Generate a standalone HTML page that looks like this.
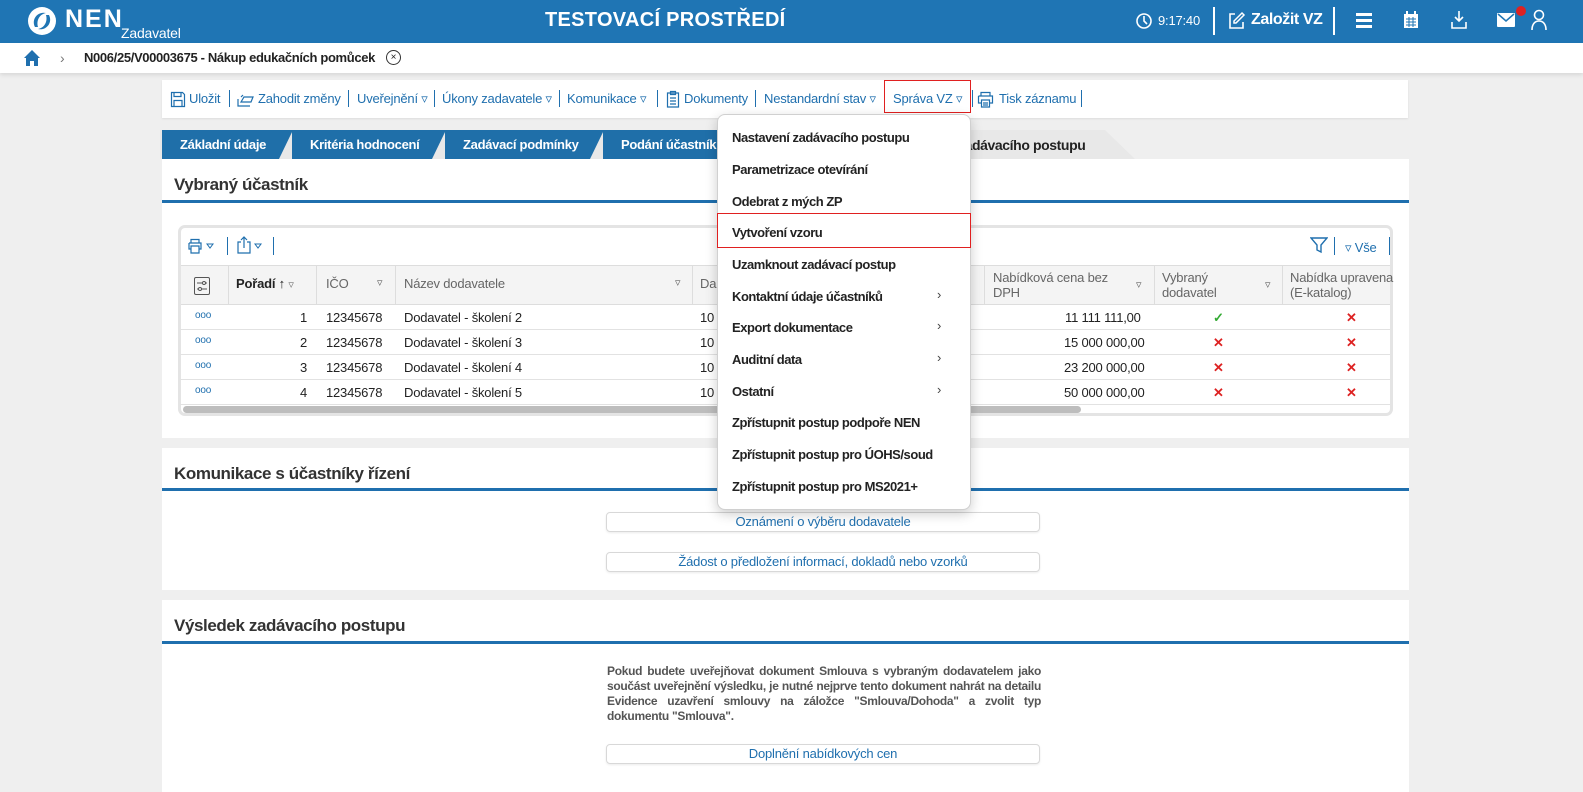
<!DOCTYPE html>
<html><head><meta charset="utf-8"><style>
*{box-sizing:border-box;margin:0;padding:0}
body{width:1583px;height:792px;overflow:hidden;background:#efefef;font-family:"Liberation Sans",sans-serif;font-size:13px;color:#222;position:relative;letter-spacing:-0.2px}
.a{position:absolute;white-space:nowrap}
.hdr{left:0;top:0;width:1583px;height:43px;background:#1f75b4}
.w{color:#fff}
.sep{position:absolute;width:1px;background:#1f6fae}
.panel{background:#fff;position:absolute;left:162px;width:1247px}
.ptitle{position:absolute;left:12px;font-size:17px;font-weight:bold;color:#333;letter-spacing:-0.4px}
.pline{position:absolute;left:0;width:1247px;height:3px;background:#1f6fae}
.btn{position:absolute;left:444px;width:434px;height:20px;border:1px solid #d8d8d8;border-radius:4px;text-align:center;color:#1f6fae;font-size:13px;line-height:18px;box-shadow:0 1px 2px rgba(0,0,0,.08)}
.tab{position:absolute;top:130px;height:29px;background:#1f6fa9;color:#fff;font-weight:bold;font-size:13px;line-height:30px;padding-left:18px;letter-spacing:-0.3px}
.tab:after{content:"";position:absolute;right:-14px;top:0;border-left:14px solid #1f6fa9;border-bottom:29px solid transparent}
.menu{left:717px;top:114px;width:254px;height:396px;background:#fff;border:1px solid #d0d0d0;border-radius:8px;box-shadow:0 4px 12px rgba(0,0,0,.2)}
.mi{position:absolute;left:15px;font-size:13px;color:#222;font-weight:bold;letter-spacing:-0.45px}
.chev{position:absolute;left:220px;color:#444;font-size:13px}
.row{position:absolute;left:180px;width:1210px;height:25px;border-bottom:1px solid #e2e2e2}
.c{position:absolute;top:5px}
.x{color:#d22;font-weight:bold}
</style></head><body>
<div class="a hdr"></div>
<svg class="a" style="left:26px;top:5px" width="32" height="32" viewBox="0 0 32 32"><circle cx="16" cy="16" r="14" fill="#fff"/><path d="M9 22 C5 14 12 6 20 8 C14 9 10 15 12 22Z" fill="#1f75b4"/><path d="M23 10 C27 18 20 26 12 24 C18 23 22 17 20 10Z" fill="#1f75b4"/></svg>
<div class="a w" style="left:65px;top:5px;font-size:25px;font-weight:bold;letter-spacing:2px">NEN</div>
<div class="a w" style="left:121px;top:25px;font-size:14px">Zadavatel</div>
<div class="a w" style="left:545px;top:9px;font-size:20px;font-weight:bold;letter-spacing:.3px">TESTOVACÍ PROSTŘEDÍ</div>
<svg class="a" style="left:1135px;top:12px" width="18" height="18" viewBox="0 0 18 18"><circle cx="9" cy="9" r="7" fill="none" stroke="#fff" stroke-width="1.6"/><path d="M9 4v5l3 3" fill="none" stroke="#fff" stroke-width="1.6"/></svg>
<div class="a w" style="left:1158px;top:13px;font-size:13px">9:17:40</div>
<div class="a" style="left:1213px;top:7px;width:2px;height:28px;background:#fff"></div>
<svg class="a" style="left:1227px;top:11px" width="19" height="19" viewBox="0 0 19 19"><path d="M8 3H3v14h13v-6" fill="none" stroke="#fff" stroke-width="1.6"/><path d="M15 2l2 2-8 8H7v-2z" fill="none" stroke="#fff" stroke-width="1.5"/></svg>
<div class="a w" style="left:1251px;top:11px;font-size:16px;font-weight:bold;letter-spacing:-0.4px">Založit VZ</div>
<div class="a" style="left:1333px;top:7px;width:2px;height:28px;background:#fff"></div>
<div class="a" style="left:1356px;top:13px;width:16px;height:3px;background:#fff;box-shadow:0 6px 0 #fff,0 12px 0 #fff"></div>
<svg class="a" style="left:1403px;top:11px" width="16" height="18" viewBox="0 0 16 18"><rect x="1" y="3" width="14" height="14" fill="#fff"/><rect x="3" y="0" width="2" height="4" fill="#fff"/><rect x="11" y="0" width="2" height="4" fill="#fff"/><path d="M3 8h10M3 11h10M3 14h10M6 6v10M10 6v10" stroke="#1f75b4" stroke-width="1"/></svg>
<svg class="a" style="left:1450px;top:10px" width="18" height="20" viewBox="0 0 18 20"><path d="M9 1v10M5 7l4 4 4-4M2 12v6h14v-6" fill="none" stroke="#fff" stroke-width="1.6"/></svg>
<svg class="a" style="left:1497px;top:13px" width="18" height="14" viewBox="0 0 18 14"><rect width="18" height="14" rx="1" fill="#fff"/><path d="M1 1l8 7 8-7" fill="none" stroke="#1f75b4" stroke-width="1.5"/></svg>
<div class="a" style="left:1516px;top:6px;width:10px;height:10px;border-radius:5px;background:#d22"></div>
<svg class="a" style="left:1531px;top:9px" width="16" height="22" viewBox="0 0 16 22"><circle cx="8" cy="6" r="4.5" fill="none" stroke="#fff" stroke-width="1.6"/><path d="M1 21c0-6 3-9 7-9s7 3 7 9" fill="none" stroke="#fff" stroke-width="1.6"/></svg>

<div class="a" style="left:0;top:43px;width:1583px;height:30px;background:#fff;box-shadow:0 2px 4px rgba(0,0,0,.1)"></div>
<svg class="a" style="left:23px;top:49px" width="18" height="17" viewBox="0 0 18 17"><path d="M9 1L1 9h2v8h4v-5h4v5h4V9h2z" fill="#1f6fae"/></svg>
<div class="a" style="left:60px;top:50px;color:#777;font-size:14px">›</div>
<div class="a" style="left:84px;top:50px;font-size:13px;font-weight:bold;letter-spacing:-0.35px">N006/25/V00003675 - Nákup edukačních pomůcek</div>
<div class="a" style="left:386px;top:50px;width:15px;height:15px;border:1px solid #333;border-radius:8px;font-size:10px;text-align:center;line-height:13px">×</div>

<div class="a" style="left:162px;top:80px;width:1246px;height:38px;background:#fff;box-shadow:0 1px 2px rgba(0,0,0,.08)"></div>
<svg class="a" style="left:170px;top:91px" width="16" height="17" viewBox="0 0 16 17"><path d="M1.5 1.5h11l2 2v12h-13z M4 1.5v4h7v-4 M4 15.5v-6h8v6" fill="none" stroke="#1f6fae" stroke-width="1.2"/></svg>
<svg class="a" style="left:237px;top:93px" width="18" height="14" viewBox="0 0 18 14"><path d="M1 6v7h12 M4 9l3-5h9l-2 5z M4 4l2-2" fill="none" stroke="#1f6fae" stroke-width="1.2"/></svg>
<svg class="a" style="left:666px;top:90px" width="14" height="18" viewBox="0 0 14 18"><path d="M1.5 3h11v14h-11z M4.5 1.5h5v3h-5z M4 8h6M4 11h6M4 14h6" fill="none" stroke="#1f6fae" stroke-width="1.2"/></svg>
<svg class="a" style="left:977px;top:91px" width="17" height="17" viewBox="0 0 17 17"><path d="M4 5V1.5h9V5 M1.5 5h14v7h-3 M4.5 12h-3V5 M4.5 9h8v7h-8z M6 12h5M6 14h5" fill="none" stroke="#1f6fae" stroke-width="1.2"/></svg>
<div class="a" style="left:170px;top:91px;color:#1f6fae;font-size:13px">
<span style="position:absolute;left:19px">Uložit</span>
<span style="position:absolute;left:88px">Zahodit změny</span>
<span style="position:absolute;left:187px">Uveřejnění ▿</span>
<span style="position:absolute;left:272px">Úkony zadavatele ▿</span>
<span style="position:absolute;left:397px">Komunikace ▿</span>
<span style="position:absolute;left:514px">Dokumenty</span>
<span style="position:absolute;left:594px">Nestandardní stav ▿</span>
<span style="position:absolute;left:723px">Správa VZ ▿</span>
<span style="position:absolute;left:829px">Tisk záznamu</span>
</div>
<div class="sep" style="left:229px;top:90px;height:17px"></div>
<div class="sep" style="left:348px;top:90px;height:17px"></div>
<div class="sep" style="left:434px;top:90px;height:17px"></div>
<div class="sep" style="left:559px;top:90px;height:17px"></div>
<div class="sep" style="left:657px;top:90px;height:17px"></div>
<div class="sep" style="left:755px;top:90px;height:17px"></div>
<div class="sep" style="left:972px;top:90px;height:17px"></div>
<div class="sep" style="left:1081px;top:90px;height:17px"></div>
<div class="a" style="left:884px;top:80px;width:87px;height:33px;border:1px solid #e02020"></div>

<div class="a" style="left:160px;top:130px;width:975px;height:29px;background:#e8e8e8;clip-path:polygon(0 0,945px 0,975px 29px,0 29px)"></div>
<div class="tab" style="left:162px;width:117px">Základní údaje</div>
<div class="tab" style="left:292px;width:140px">Kritéria hodnocení</div>
<div class="tab" style="left:445px;width:145px">Zadávací podmínky</div>
<div class="tab" style="left:603px;width:130px">Podání účastníků</div>
<div class="a" style="left:958px;top:137px;font-weight:bold;font-size:14px;letter-spacing:-0.4px">zadávacího postupu</div>

<div class="panel" style="top:159px;height:279px">
<div class="ptitle" style="top:16px">Vybraný účastník</div>
<div class="pline" style="top:41px"></div>
</div>
<div class="a" style="left:178px;top:225px;width:1215px;height:191px;border:3px solid #e4e4e4;border-radius:7px;background:#fff"></div>
<svg class="a" style="left:188px;top:238px" width="28" height="16" viewBox="0 0 28 16"><path d="M3 5V1.5h8V5 M1 5h12v6h-2 M3 11H1V5 M3 8h8v7H3z" fill="none" stroke="#1f6fae" stroke-width="1.2"/><path d="M19 6h6l-3 4z" fill="none" stroke="#1f6fae" stroke-width="1"/></svg>
<div class="sep" style="left:227px;top:237px;height:18px"></div>
<svg class="a" style="left:236px;top:236px" width="28" height="18" viewBox="0 0 28 18"><path d="M5 6H2v11h12V6h-3 M8 12V1 M5 4l3-3 3 3" fill="none" stroke="#1f6fae" stroke-width="1.2"/><path d="M19 8h6l-3 4z" fill="none" stroke="#1f6fae" stroke-width="1"/></svg>
<div class="sep" style="left:273px;top:237px;height:18px"></div>
<svg class="a" style="left:1310px;top:236px" width="18" height="18" viewBox="0 0 18 18"><path d="M1 2h16l-6 7v7l-4-2V9z" fill="none" stroke="#1f6fae" stroke-width="1.4"/></svg>
<div class="sep" style="left:1334px;top:237px;height:18px"></div>
<div class="a" style="left:1345px;top:240px;color:#1f6fae;font-size:13px">▿ Vše</div>
<div class="sep" style="left:1389px;top:237px;height:18px"></div>
<div class="a" style="left:181px;top:265px;width:1209px;height:40px;background:#f4f4f4;border-top:1px solid #ddd;border-bottom:1px solid #ddd"></div>
<svg class="a" style="left:194px;top:277px" width="16" height="18" viewBox="0 0 16 18"><rect x="0.5" y="0.5" width="15" height="17" rx="1.5" fill="none" stroke="#555"/><path d="M3 6h10M3 12h10" stroke="#555"/><circle cx="10" cy="6" r="1.5" fill="#fff" stroke="#555"/><circle cx="6" cy="12" r="1.5" fill="#fff" stroke="#555"/></svg>
<div class="a" style="left:228px;top:266px;width:1px;height:38px;background:#ddd"></div>
<div class="a" style="left:316px;top:266px;width:1px;height:38px;background:#ddd"></div>
<div class="a" style="left:395px;top:266px;width:1px;height:38px;background:#ddd"></div>
<div class="a" style="left:692px;top:266px;width:1px;height:38px;background:#ddd"></div>
<div class="a" style="left:984px;top:266px;width:1px;height:38px;background:#ddd"></div>
<div class="a" style="left:1154px;top:266px;width:1px;height:38px;background:#ddd"></div>
<div class="a" style="left:1282px;top:266px;width:1px;height:38px;background:#ddd"></div>
<div class="a" style="left:236px;top:276px;font-weight:bold">Pořadí ↑ <span style="color:#777;font-weight:normal;font-size:11px">▿</span></div>
<div class="a" style="left:326px;top:276px;color:#666">IČO</div><div class="a" style="left:377px;top:276px;color:#666;font-size:11px">▿</div>
<div class="a" style="left:404px;top:276px;color:#666">Název dodavatele</div><div class="a" style="left:675px;top:276px;color:#666;font-size:11px">▿</div>
<div class="a" style="left:700px;top:276px;color:#666">Da</div>
<div class="a" style="left:993px;top:270px;color:#666;line-height:15px">Nabídková cena bez<br>DPH</div><div class="a" style="left:1136px;top:278px;color:#666;font-size:11px">▿</div>
<div class="a" style="left:1162px;top:270px;color:#666;line-height:15px">Vybraný<br>dodavatel</div><div class="a" style="left:1265px;top:278px;color:#666;font-size:11px">▿</div>
<div class="a" style="left:1290px;top:270px;color:#666;line-height:15px">Nabídka upravena<br>(E-katalog)</div>

<div class="row" style="top:305px"><span class="c" style="left:15px;color:#1f6fae;font-size:10px">ooo</span><span class="c" style="left:120px">1</span><span class="c" style="left:146px">12345678</span><span class="c" style="left:224px">Dodavatel - školení 2</span><span class="c" style="left:520px">10</span><span class="c" style="left:885px">11 111 111,00</span><span class="c" style="left:1033px;color:#3a3;font-weight:bold">✓</span><span class="c x" style="left:1166px">✕</span></div>
<div class="row" style="top:330px"><span class="c" style="left:15px;color:#1f6fae;font-size:10px">ooo</span><span class="c" style="left:120px">2</span><span class="c" style="left:146px">12345678</span><span class="c" style="left:224px">Dodavatel - školení 3</span><span class="c" style="left:520px">10</span><span class="c" style="left:884px">15 000 000,00</span><span class="c x" style="left:1033px">✕</span><span class="c x" style="left:1166px">✕</span></div>
<div class="row" style="top:355px"><span class="c" style="left:15px;color:#1f6fae;font-size:10px">ooo</span><span class="c" style="left:120px">3</span><span class="c" style="left:146px">12345678</span><span class="c" style="left:224px">Dodavatel - školení 4</span><span class="c" style="left:520px">10</span><span class="c" style="left:884px">23 200 000,00</span><span class="c x" style="left:1033px">✕</span><span class="c x" style="left:1166px">✕</span></div>
<div class="row" style="top:380px"><span class="c" style="left:15px;color:#1f6fae;font-size:10px">ooo</span><span class="c" style="left:120px">4</span><span class="c" style="left:146px">12345678</span><span class="c" style="left:224px">Dodavatel - školení 5</span><span class="c" style="left:520px">10</span><span class="c" style="left:884px">50 000 000,00</span><span class="c x" style="left:1033px">✕</span><span class="c x" style="left:1166px">✕</span></div>
<div class="a" style="left:183px;top:406px;width:898px;height:7px;border-radius:4px;background:#bdbdbd"></div>

<div class="panel" style="top:448px;height:142px">
<div class="ptitle" style="top:16px">Komunikace s účastníky řízení</div>
<div class="pline" style="top:40px"></div>
<div class="btn" style="top:64px">Oznámení o výběru dodavatele</div>
<div class="btn" style="top:104px">Žádost o předložení informací, dokladů nebo vzorků</div>
</div>

<div class="panel" style="top:600px;height:192px">
<div class="ptitle" style="top:16px">Výsledek zadávacího postupu</div>
<div class="pline" style="top:41px"></div>
<div style="position:absolute;left:445px;top:64px;width:434px;font-size:12px;font-weight:bold;color:#555;text-align:justify;line-height:15px;letter-spacing:-0.3px">Pokud budete uveřejňovat dokument Smlouva s vybraným dodavatelem jako součást uveřejnění výsledku, je nutné nejprve tento dokument nahrát na detailu Evidence uzavření smlouvy na záložce "Smlouva/Dohoda" a zvolit typ dokumentu "Smlouva".</div>
<div class="btn" style="top:144px">Doplnění nabídkových cen</div>
</div>

<div class="a menu"></div>
<div class="a" style="left:717px;top:114px;width:254px;height:396px">
<div class="mi" style="top:16px">Nastavení zadávacího postupu</div>
<div class="mi" style="top:48px">Parametrizace otevírání</div>
<div class="mi" style="top:80px">Odebrat z mých ZP</div>
<div class="mi" style="top:111px">Vytvoření vzoru</div>
<div class="mi" style="top:143px">Uzamknout zadávací postup</div>
<div class="mi" style="top:175px">Kontaktní údaje účastníků</div><div class="chev" style="top:173px">›</div>
<div class="mi" style="top:206px">Export dokumentace</div><div class="chev" style="top:204px">›</div>
<div class="mi" style="top:238px">Auditní data</div><div class="chev" style="top:236px">›</div>
<div class="mi" style="top:270px">Ostatní</div><div class="chev" style="top:268px">›</div>
<div class="mi" style="top:301px">Zpřístupnit postup podpoře NEN</div>
<div class="mi" style="top:333px">Zpřístupnit postup pro ÚOHS/soud</div>
<div class="mi" style="top:365px">Zpřístupnit postup pro MS2021+</div>
</div>
<div class="a" style="left:717px;top:213px;width:254px;height:35px;border:1px solid #e02020"></div>
</body></html>
